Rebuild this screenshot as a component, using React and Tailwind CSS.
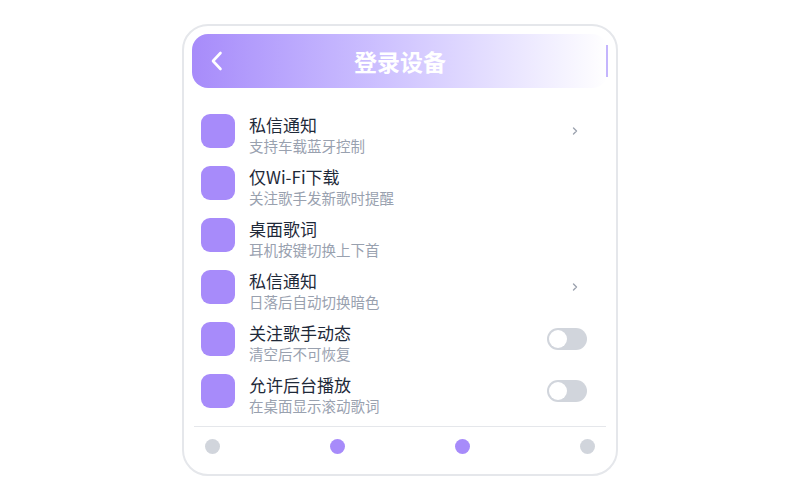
import React from 'react';

const rows = [
  { title: '私信通知', sub: '支持车载蓝牙控制', right: 'chevron' },
  { title: '仅Wi-Fi下载', sub: '关注歌手发新歌时提醒' },
  { title: '桌面歌词', sub: '耳机按键切换上下首' },
  { title: '私信通知', sub: '日落后自动切换暗色', right: 'chevron' },
  { title: '关注歌手动态', sub: '清空后不可恢复', right: 'toggle' },
  { title: '允许后台播放', sub: '在桌面显示滚动歌词', right: 'toggle' },
];

const Toggle = () => (
  <div className="w-[40px] h-[22px] rounded-full bg-gray-300 p-[2px] flex items-center">
    <div className="w-[18px] h-[18px] rounded-full bg-white" />
  </div>
);

const Chevron = () => (
  <svg width="8" height="10" viewBox="0 0 8 10" fill="none" className="mr-[8px]">
    <path d="M2.5 2 L5.5 5 L2.5 8" stroke="#9ca3af" strokeWidth="1.4" strokeLinecap="round" strokeLinejoin="round" />
  </svg>
);

const App = () => {
  return (
    <div
      className="w-[800px] h-[500px] bg-white flex items-start justify-center pt-[24px]"
      style={{ fontFamily: '"Noto Sans CJK SC", "Noto Sans", sans-serif' }}
    >
      <div className="w-[436px] h-[452px] border-2 border-gray-200 rounded-[26px] p-[8px] flex flex-col">
        {/* header */}
        <div className="relative h-[54px] shrink-0 rounded-2xl bg-gradient-to-r from-[#a78bfa] to-white flex items-center px-[18px]">
          <svg width="14" height="22" viewBox="0 0 14 22" fill="none">
            <path d="M10.5 3 L3 11 L10.5 19" stroke="white" strokeWidth="2.6" strokeLinecap="round" strokeLinejoin="round" />
          </svg>
          <div className="absolute inset-0 flex items-center justify-center text-white text-[23px] font-bold">
            登录设备
          </div>
          <div className="absolute right-0 top-[11px] w-[2px] h-[32px] bg-[#c4b5fd]" />
        </div>

        {/* list */}
        <div className="flex flex-col pt-[26px] px-[9px]">
          {rows.map((r, i) => (
            <div key={i} className="h-[52px] flex items-start">
              <div className="w-[34px] h-[34px] rounded-[9px] bg-[#a78bfa] shrink-0" />
              <div className="ml-[14px] flex-1 flex flex-col -mt-[1px]">
                <span className="text-[17px] leading-[24px] text-gray-800">{r.title}</span>
                <span className="text-[14.5px] leading-[17px] text-gray-400">{r.sub}</span>
              </div>
              <div className="h-[34px] mr-[12px] flex items-center">
                {r.right === 'chevron' && <Chevron />}
                {r.right === 'toggle' && <Toggle />}
              </div>
            </div>
          ))}
        </div>

        {/* footer */}
        <div className="mt-auto border-t border-gray-200 h-[42px] flex items-center justify-between px-[11px] mx-[2px]">
          <div className="w-[15px] h-[15px] rounded-full bg-gray-300" />
          <div className="w-[15px] h-[15px] rounded-full bg-[#a78bfa]" />
          <div className="w-[15px] h-[15px] rounded-full bg-[#a78bfa]" />
          <div className="w-[15px] h-[15px] rounded-full bg-gray-300" />
        </div>
      </div>
    </div>
  );
};

export default App;
